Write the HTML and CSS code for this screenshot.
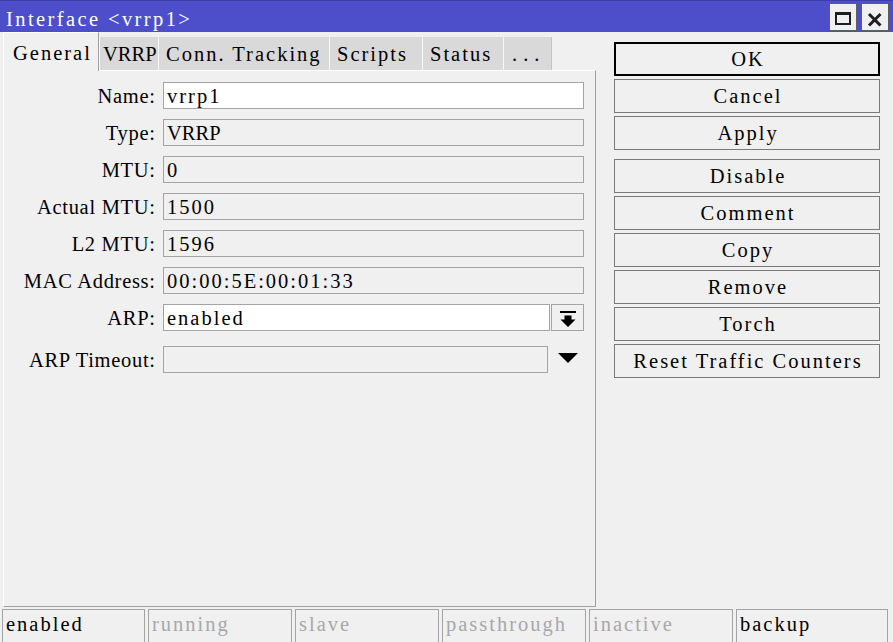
FILE: index.html
```html
<!DOCTYPE html>
<html>
<head>
<meta charset="utf-8">
<title>Interface &lt;vrrp1&gt;</title>
<link rel="stylesheet" href="styles.css">
</head>
<body>
<div class="window">
  <div class="titlebar">
    <div class="title">Interface &lt;vrrp1&gt;</div>
    <div class="tbtns">
      <div class="tbtn">
        <svg width="28" height="28" viewBox="0 0 28 28"><path d="M6 9h16v13H6z M8 12v8h12v-8z" fill="#1e1e1e" fill-rule="evenodd"/></svg>
      </div>
      <div class="tbtn">
        <svg width="28" height="28" viewBox="0 0 28 28"><path d="M8 11L19.5 22.5M19.5 11L8 22.5" stroke="#1e1e1e" stroke-width="3" fill="none"/></svg>
      </div>
    </div>
  </div>
  <div class="main">
    <div class="left">
      <div class="tabs">
        <div class="tab active tab-general">General</div>
        <div class="tab tab-vrrp">VRRP</div>
        <div class="tab tab-conn">Conn. Tracking</div>
        <div class="tab tab-scripts">Scripts</div>
        <div class="tab tab-status">Status</div>
        <div class="tab tab-more">...</div>
      </div>
      <div class="panel">
        <div class="form">
          <div class="label">Name:</div>
          <div class="field edit">vrrp1</div>
          <div class="label">Type:</div>
          <div class="field tight">VRRP</div>
          <div class="label">MTU:</div>
          <div class="field">0</div>
          <div class="label">Actual MTU:</div>
          <div class="field">1500</div>
          <div class="label">L2 MTU:</div>
          <div class="field">1596</div>
          <div class="label">MAC Address:</div>
          <div class="field">00:00:5E:00:01:33</div>
          <div class="label">ARP:</div>
          <div class="combo">
            <div class="field edit grow">enabled</div>
            <div class="ddbtn">
              <svg width="16" height="16" viewBox="0 0 16 16"><path d="M0 0h16v2H0z M4.5 4.5h7v4h4l-7.5 7.5L0.5 8.5h4z" fill="#000"/></svg>
            </div>
          </div>
          <div class="label gap">ARP Timeout:</div>
          <div class="combo gap">
            <div class="field grow"></div>
            <div class="arrow">
              <svg width="20" height="10" viewBox="0 0 20 10"><path d="M0 0h20L10 10z" fill="#000"/></svg>
            </div>
          </div>
        </div>
      </div>
    </div>
    <div class="right">
      <div class="btn default">OK</div>
      <div class="btn">Cancel</div>
      <div class="btn">Apply</div>
      <div class="btn sep">Disable</div>
      <div class="btn">Comment</div>
      <div class="btn">Copy</div>
      <div class="btn">Remove</div>
      <div class="btn">Torch</div>
      <div class="btn">Reset Traffic Counters</div>
    </div>
  </div>
  <div class="status">
    <div class="cell first">enabled</div>
    <div class="cell off">running</div>
    <div class="cell off">slave</div>
    <div class="cell off">passthrough</div>
    <div class="cell off">inactive</div>
    <div class="cell wide">backup</div>
  </div>
</div>
</body>
</html>
```
FILE: styles.css
```css
html, body {
  margin: 0;
  padding: 0;
}
body {
  width: 893px;
  height: 642px;
  overflow: hidden;
  background: #f0f0f0;
  font-family: "Liberation Serif", "DejaVu Serif", serif;
  font-size: 20.5px;
  letter-spacing: 2px;
  color: #000;
}
.window {
  height: 642px;
  display: flex;
  flex-direction: column;
}
.titlebar {
  height: 31px;
  flex: none;
  border-top: 1px solid #3b3ea6;
  background: #4c4fc9;
  display: flex;
  justify-content: space-between;
  align-items: flex-start;
}
.title {
  color: #fff;
  padding-left: 6px;
  height: 31px;
  line-height: 37px;
  white-space: nowrap;
  letter-spacing: 2.4px;
}
.tbtns {
  display: flex;
  gap: 4px;
  margin-top: 2px;
  margin-right: 4px;
}
.tbtn {
  width: 28px;
  height: 28px;
  box-sizing: border-box;
  border: 1px solid #5e5e5e;
  background: #f0f0f0;
  display: flex;
  align-items: center;
  justify-content: center;
}
.tbtn svg {
  display: block;
  margin: -1px;
}
.main {
  flex: 1;
  display: flex;
  min-height: 0;
}
.left {
  width: 593px;
  margin-left: 3px;
  display: flex;
  flex-direction: column;
}
.tabs {
  height: 38px;
  flex: none;
  display: flex;
  align-items: flex-end;
}
.tab {
  height: 33px;
  box-sizing: border-box;
  background: #d9d9d9;
  border-left: 1px solid #f6f6f6;
  padding-left: 7px;
  line-height: 35px;
  white-space: nowrap;
  overflow: hidden;
}
.tab.active {
  position: relative;
  z-index: 1;
  height: 39px;
  margin-bottom: -1px;
  background: #f0f0f0;
  border-left: 1px solid #fff;
  border-top: 1px solid #fff;
  border-right: 1px solid #a0a0a0;
  padding: 3px 0 0 9px;
}
.tab-general { width: 96px; }
.tab-vrrp {
  width: 59px;
  padding-left: 3px;
  letter-spacing: 0;
}
.tab-conn { width: 171px; }
.tab-scripts { width: 93px; }
.tab-status { width: 81px; }
.tab-more {
  width: 49px;
  padding-left: 8px;
  letter-spacing: 6px;
  border-right: 1px solid #c4c4c4;
}
.panel {
  flex: 1;
  box-sizing: border-box;
  border-left: 1px solid #fff;
  border-top: 1px solid #fff;
  border-right: 1px solid #a0a0a0;
  border-bottom: 1px solid #a0a0a0;
  padding: 11px 11px 0 0;
}
.form {
  display: grid;
  grid-template-columns: 151px 1fr;
  column-gap: 8px;
  row-gap: 10px;
}
.label {
  height: 27px;
  line-height: 29px;
  text-align: right;
  white-space: nowrap;
  letter-spacing: 0.7px;
  margin-right: -0.7px;
}
.field {
  height: 27px;
  box-sizing: border-box;
  border: 1px solid #a4a4a4;
  background: #f0f0f0;
  padding-left: 3px;
  line-height: 27px;
  white-space: nowrap;
}
.field.edit {
  background: #fff;
}
.field.tight {
  letter-spacing: 0;
}
.combo {
  display: flex;
  gap: 1px;
}
.grow {
  flex: 1;
}
.gap {
  margin-top: 5px;
}
.ddbtn {
  width: 33px;
  height: 27px;
  box-sizing: border-box;
  border: 1px solid #a4a4a4;
  background: #f0f0f0;
  display: flex;
  align-items: center;
  justify-content: center;
}
.ddbtn svg {
  display: block;
  margin-top: 2px;
  margin-left: 1px;
}
.arrow {
  width: 35px;
  height: 27px;
  display: flex;
  align-items: center;
  justify-content: center;
}
.arrow svg {
  display: block;
  margin-left: 2px;
  margin-top: -3px;
}
.right {
  flex: 1;
  padding: 10px 0 0 18px;
  display: flex;
  flex-direction: column;
  gap: 3px;
}
.btn {
  width: 266px;
  height: 34px;
  flex: none;
  box-sizing: border-box;
  border: 1px solid #7a7a7a;
  background: #f0f0f0;
  text-align: center;
  line-height: 32px;
  white-space: nowrap;
  text-indent: 2px;
}
.btn.default {
  border: 2px solid #000;
  line-height: 30px;
}
.btn.sep {
  margin-top: 6px;
}
.status {
  height: 35px;
  flex: none;
  box-sizing: border-box;
  padding: 2px 0 0 2px;
  display: flex;
  gap: 3px;
}
.cell {
  width: 144px;
  height: 33px;
  box-sizing: border-box;
  border: 1px solid #a4a4a4;
  border-bottom: none;
  padding-left: 3px;
  line-height: 28px;
  white-space: nowrap;
}
.cell.first {
  width: 143px;
}
.cell.wide {
  width: 152px;
}
.cell.off {
  color: #a8a8a8;
}
```
